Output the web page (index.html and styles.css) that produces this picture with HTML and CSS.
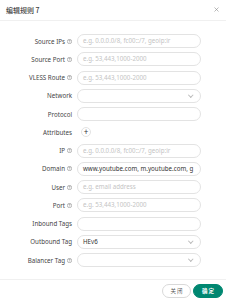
FILE: index.html
```html
<!DOCTYPE html>
<html lang="zh">
<head>
    <meta charset="UTF-8">
    <meta name="viewport" content="width=device-width, initial-scale=1.0">
    <title>编辑规则 7</title>
    <link rel="stylesheet" href="styles.css">
</head>
<body>
    <svg class="sprite" width="0" height="0">
        <symbol id="q" viewBox="0 0 12 12">
            <circle cx="6" cy="6" r="5.2" fill="none" stroke="#555" stroke-width="1"/>
            <path d="M4.3 4.7 C4.3 3.6 5 3 6 3 C7 3 7.7 3.6 7.7 4.5 C7.7 5.6 6 5.7 6 7" fill="none" stroke="#555" stroke-width="1"/>
            <circle cx="6" cy="8.8" r="0.65" fill="#555"/>
        </symbol>
    </svg>
    <div class="modal">
        <div class="modal-header">
            <span class="modal-title">编辑规则 7</span>
            <svg class="close-icon" viewBox="0 0 10 10" width="5" height="5">
                <path d="M1 1 L9 9 M9 1 L1 9" stroke="#8c8c8c" stroke-width="1.2" fill="none"/>
            </svg>
        </div>

        <div class="form">
            <div class="form-row">
                <label class="form-label">Source IPs <svg class="help"><use href="#q"/></svg></label>
                <div class="input placeholder">e.g. 0.0.0.0/8, fc00::/7, geoip:ir</div>
            </div>
            <div class="form-row">
                <label class="form-label">Source Port <svg class="help"><use href="#q"/></svg></label>
                <div class="input placeholder">e.g. 53,443,1000-2000</div>
            </div>
            <div class="form-row">
                <label class="form-label">VLESS Route <svg class="help"><use href="#q"/></svg></label>
                <div class="input placeholder">e.g. 53,443,1000-2000</div>
            </div>
            <div class="form-row">
                <label class="form-label">Network</label>
                <div class="input select"><span></span><span class="arrow"></span></div>
            </div>
            <div class="form-row">
                <label class="form-label">Protocol</label>
                <div class="input"></div>
            </div>
            <div class="form-row">
                <label class="form-label">Attributes</label>
                <div class="add-btn">+</div>
            </div>
            <div class="form-row">
                <label class="form-label">IP <svg class="help"><use href="#q"/></svg></label>
                <div class="input placeholder">e.g. 0.0.0.0/8, fc00::/7, geoip:ir</div>
            </div>
            <div class="form-row">
                <label class="form-label">Domain <svg class="help"><use href="#q"/></svg></label>
                <div class="input">www.youtube.com, m.youtube.com, g</div>
            </div>
            <div class="form-row">
                <label class="form-label">User <svg class="help"><use href="#q"/></svg></label>
                <div class="input placeholder">e.g. email address</div>
            </div>
            <div class="form-row">
                <label class="form-label">Port <svg class="help"><use href="#q"/></svg></label>
                <div class="input placeholder">e.g. 53,443,1000-2000</div>
            </div>
            <div class="form-row">
                <label class="form-label">Inbound Tags</label>
                <div class="input"></div>
            </div>
            <div class="form-row">
                <label class="form-label">Outbound Tag</label>
                <div class="input select"><span>HEv6</span><span class="arrow"></span></div>
            </div>
            <div class="form-row">
                <label class="form-label">Balancer Tag <svg class="help"><use href="#q"/></svg></label>
                <div class="input select"><span></span><span class="arrow"></span></div>
            </div>
        </div>

        <div class="modal-footer">
            <button class="btn">关 闭</button>
            <button class="btn btn-primary">确 定</button>
        </div>
    </div>
</body>
</html>
```

FILE: styles.css
```css
:root {
    --primary: #008771;
    --border: #d9d9d9;
    --text: #333;
    --muted: #c4c4c4;
}

body {
    margin: 0;
    background: white;
    font-family: "Noto Sans", "Open Sans", "Noto Sans CJK SC", sans-serif;
    color: var(--text);
}

.sprite {
    position: absolute;
}

.modal {
    width: 226px;
    height: 300px;
    display: flex;
    flex-direction: column;
}

.modal-header {
    height: 21px;
    box-sizing: border-box;
    border-bottom: 1px solid #f0f0f0;
    display: flex;
    align-items: center;
    justify-content: space-between;
    padding: 0 7px 1px 6px;
}

.modal-title {
    font-family: "Noto Sans CJK SC", sans-serif;
    font-size: 7px;
    font-weight: 500;
    color: #444;
}

.form {
    display: flex;
    flex-direction: column;
    gap: 4.25px;
    padding-top: 13px;
}

.form-row {
    display: flex;
    align-items: center;
    height: 14px;
}

.form-label {
    width: 72px;
    height: 14px;
    display: flex;
    justify-content: flex-end;
    align-items: center;
    gap: 2px;
    font-size: 6.2px;
    color: #444;
    margin-right: 5px;
    white-space: nowrap;
}

.help {
    width: 5px;
    height: 5px;
    flex: none;
}

.input {
    width: 124px;
    height: 14px;
    box-sizing: border-box;
    border: 1px solid #e3e3e3;
    border-radius: 7px;
    padding: 0 6px 0 5px;
    font-size: 6.2px;
    line-height: 12px;
    white-space: nowrap;
    overflow: hidden;
}

.input.placeholder {
    color: var(--muted);
}

.select {
    display: flex;
    justify-content: space-between;
    align-items: center;
}

.arrow {
    width: 2.5px;
    height: 2.5px;
    border-right: 0.6px solid #bbb;
    border-bottom: 0.6px solid #bbb;
    transform: rotate(45deg);
    margin: -2px 2px 0 0;
}

.add-btn {
    width: 10px;
    height: 10px;
    box-sizing: border-box;
    border: 1px solid #e3e3e3;
    border-radius: 50%;
    margin-left: 4px;
    font-size: 8px;
    line-height: 7.5px;
    text-align: center;
    color: #333;
}

.modal-footer {
    margin-top: auto;
    border-top: 1px solid #f0f0f0;
    height: 21px;
    box-sizing: border-box;
    display: flex;
    justify-content: flex-end;
    align-items: center;
    gap: 2px;
    padding: 2px 3px 0 0;
}

.btn {
    width: 29px;
    height: 14px;
    box-sizing: border-box;
    border: 1px solid var(--border);
    border-radius: 7px;
    background: white;
    color: #555;
    font-family: "Noto Sans CJK SC", sans-serif;
    font-size: 5.5px;
    padding: 0;
}

.btn-primary {
    width: 30px;
    background: var(--primary);
    border-color: var(--primary);
    color: white;
    font-weight: 600;
}
```
